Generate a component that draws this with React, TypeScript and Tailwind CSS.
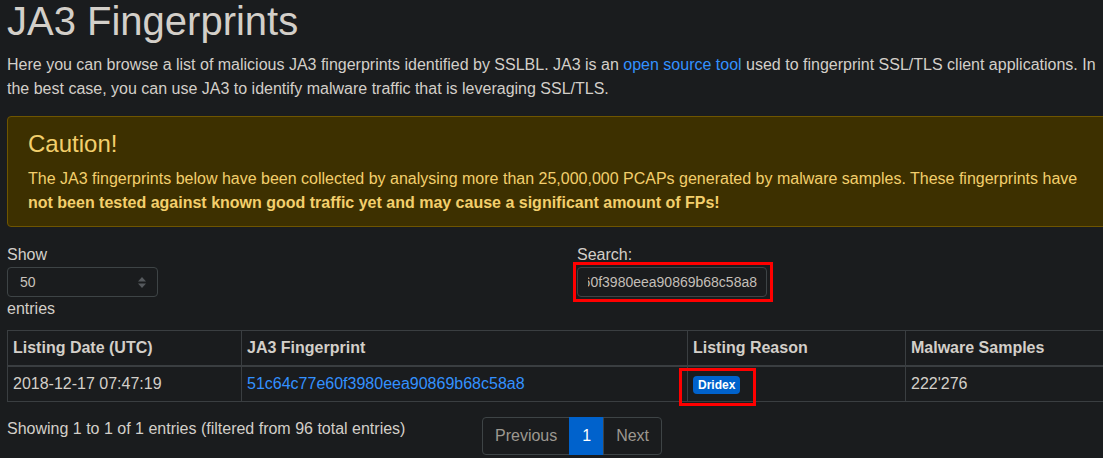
export default function App() {
  return (
    <div className="w-screen h-[458px] overflow-hidden bg-[#1a1c1e] text-[#d3cfc9] font-['Liberation_Sans',Arial,sans-serif]">
      <div className="w-[1110px] ml-[7px]">
        {/* Heading */}
        <h1 className="text-[40px] leading-[48px] font-normal mt-[-3px] mb-2">JA3 Fingerprints</h1>
        <p className="text-base leading-6 mb-[15px]">
          Here you can browse a list of malicious JA3 fingerprints identified by SSLBL. JA3 is an{" "}
          <a className="text-[#3391ff]">open source tool</a> used to fingerprint SSL/TLS client
          applications. In the best case, you can use JA3 to identify malware traffic that is
          leveraging SSL/TLS.
        </p>

        {/* Warning */}
        <div className="bg-[#3d3000] border border-[#6e5500] rounded px-5 pt-3 pb-[11px] text-[#f3cf6c] mb-4">
          <h4 className="text-2xl leading-[29px] font-normal mb-[9px]">Caution!</h4>
          <p className="text-base leading-6">
            The JA3 fingerprints below have been collected by analysing more than 25,000,000 PCAPs
            generated by malware samples. These fingerprints have{" "}
            <b>not been tested against known good traffic yet and may cause a significant amount of FPs!</b>
          </p>
        </div>

        {/* Controls */}
        <div className="flex">
          <div className="w-[570px] text-base leading-6">
            <div>Show</div>
            <div className="relative w-[151px] h-[30px] border border-[#3e4446] rounded flex items-center pl-3 text-sm text-[#c8c3bc]">
              50
              <svg className="absolute right-[11px] top-[9px]" width="8" height="11" viewBox="0 0 8 11">
                <path d="M4 0 L8 4.5 H0 Z" fill="#55595d" />
                <path d="M0 6.5 H8 L4 11 Z" fill="#55595d" />
              </svg>
            </div>
            <div>entries</div>
          </div>
          <div className="text-base leading-6">
            <div>Search:</div>
            <div className="relative w-[190px] h-[30px] border border-[#3e4446] rounded flex items-center pl-[10px] pr-[9px]">
              <div className="flex-1 overflow-hidden flex justify-end whitespace-nowrap text-sm text-[#c4bfb8]">
                51c64c77e60f3980eea90869b68c58a8
              </div>
              <div className="absolute left-[-5px] right-[-7px] top-[-6px] bottom-[-6px] border-[3px] border-[#ff0000]" />
            </div>
          </div>
        </div>

        {/* Table */}
        <table className="table-fixed border-collapse w-[1110px] mt-[9px] text-base leading-6">
          <colgroup>
            <col className="w-[234px]" />
            <col className="w-[446px]" />
            <col className="w-[218px]" />
            <col className="w-[212px]" />
          </colgroup>
          <thead>
            <tr className="text-left">
              <th className="border border-[#3a3e41] border-b-2 px-[5px] py-[5px] font-bold align-bottom">Listing Date (UTC)</th>
              <th className="border border-[#3a3e41] border-b-2 px-[5px] py-[5px] font-bold align-bottom">JA3 Fingerprint</th>
              <th className="border border-[#3a3e41] border-b-2 px-[5px] py-[5px] font-bold align-bottom">Listing Reason</th>
              <th className="border border-[#3a3e41] border-b-2 px-[5px] py-[5px] font-bold align-bottom">Malware Samples</th>
            </tr>
          </thead>
          <tbody>
            <tr>
              <td className="border border-[#3a3e41] px-[5px] py-[5px]">2018-12-17 07:47:19</td>
              <td className="border border-[#3a3e41] px-[5px] py-[5px]">
                <a className="text-[#3391ff]">51c64c77e60f3980eea90869b68c58a8</a>
              </td>
              <td className="border border-[#3a3e41] px-[5px] py-[5px]">
                <span className="relative inline-block bg-[#0062cc] text-white text-xs font-bold leading-3 px-[5px] py-[3px] rounded">
                  Dridex
                  <span className="absolute left-[-14px] right-[-16px] top-[-8px] bottom-[-12px] border-[3px] border-[#ff0000]" />
                </span>
              </td>
              <td className="border border-[#3a3e41] px-[5px] py-[5px]">222'276</td>
            </tr>
          </tbody>
        </table>

        {/* Footer */}
        <div className="flex mt-[15px] text-base">
          <div className="w-[475px] leading-6">Showing 1 to 1 of 1 entries (filtered from 96 total entries)</div>
          <div className="flex leading-5">
            <span className="px-3 py-2 border border-[#3e4446] rounded-l text-[#9d9890]">Previous</span>
            <span className="px-3 py-2 border border-[#0062cc] bg-[#0062cc] text-white -ml-px">1</span>
            <span className="px-3 py-2 border border-[#3e4446] rounded-r text-[#9d9890] -ml-px">Next</span>
          </div>
        </div>
      </div>
    </div>
  );
}
